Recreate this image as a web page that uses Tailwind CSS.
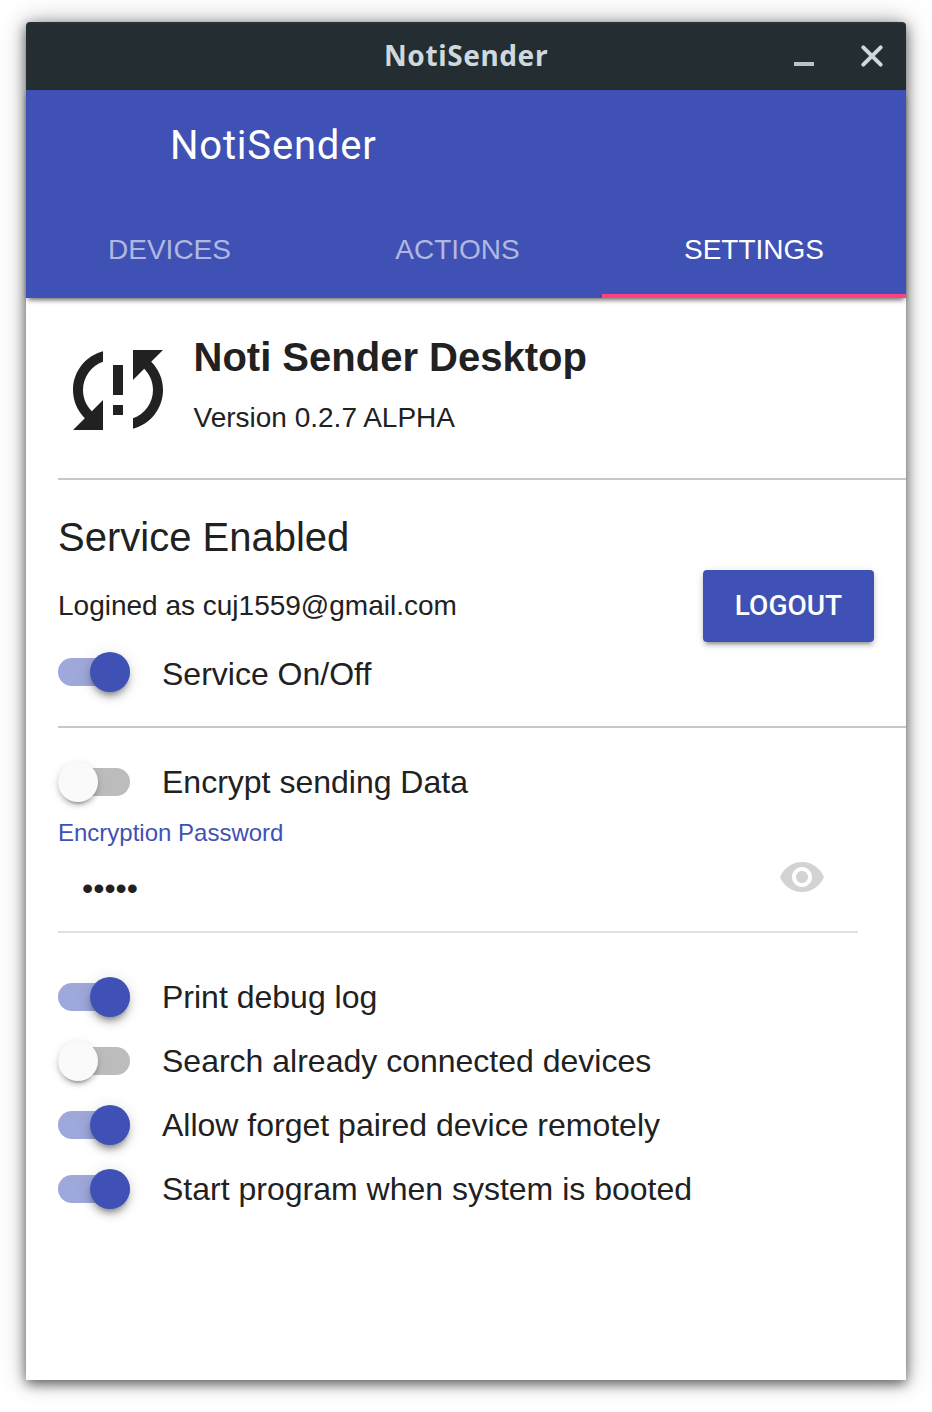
<!DOCTYPE html>
<html lang="en">
<head>
<meta charset="utf-8">
<title>NotiSender</title>
<script src="https://cdn.jsdelivr.net/npm/@tailwindcss/browser@4"></script>
</head>
<body class="bg-white h-[1412px] overflow-hidden px-[26px] pt-[22px] font-['Liberation_Sans',sans-serif] text-[#212121]">
<div class="w-[880px] h-[1358px] flex flex-col rounded-t-[4px] bg-white shadow-[0_4px_12px_rgba(0,0,0,0.52),0_0_24px_rgba(0,0,0,0.34)]">
  <div class="h-[68px] shrink-0 grid grid-cols-[1fr_auto_1fr] items-center rounded-t-[4px] bg-[#232d32] border-t-2 border-[#273238] pb-0.5">
    <span></span>
    <span class="font-['Noto_Sans',sans-serif] font-bold text-[28px] leading-[62px] pb-0.5 tracking-[0.6px] text-[#cfd8dc]">NotiSender</span>
    <div class="flex justify-end items-center gap-[46px] pr-[22px]">
      <svg class="w-5 h-6" viewBox="0 0 20 24"><path d="M0 18h20v4H0z" fill="#b9c3c9"/></svg>
      <svg class="w-6 h-6" viewBox="0 0 24 24" fill="none" stroke="#cfd8dc" stroke-width="4" stroke-linecap="round"><path d="M3.300 3.300l17.400 17.400M20.700 3.300l-17.400 17.400"/></svg>
    </div>
  </div>
  <header class="h-[208px] shrink-0 flex flex-col bg-[#3f51b5] text-white shadow-[0_4px_5px_-2px_rgba(0,0,0,0.5),0_2px_6px_-3px_rgba(0,0,0,0.3)]">
    <h1 class="h-28 pl-36 font-['Roboto',sans-serif] text-[40px] leading-[111px] tracking-[0.8px]">NotiSender</h1>
    <nav class="h-24 flex text-[28px] leading-[95px] text-center">
      <span class="w-[287px] text-white/60">DEVICES</span>
      <span class="w-[289px] text-white/60">ACTIONS</span>
      <span class="w-[304px] border-b-4 border-[#ff4081]">SETTINGS</span>
    </nav>
  </header>
  <main class="flex flex-col pl-8">
    <section class="h-[182px] flex gap-[15.5px] pt-8 border-b-2 border-[#c8c8c8]">
      <svg class="size-[120px]" viewBox="0 0 24 24" fill="#212121"><path d="M3 12c0 2.210.91 4.200 2.360 5.640L3 20h6v-6l-2.240 2.240C5.680 15.150 5 13.660 5 12c0-2.610 1.670-4.830 4-5.650V4.260C5.550 5.150 3 8.270 3 12zm8 5h2v-2h-2v2zM21 4h-6v6l2.240-2.240C18.320 8.850 19 10.340 19 12c0 2.610-1.670 4.830-4 5.650v2.090c3.450-.89 6-4.010 6-7.740 0-2.210-.91-4.200-2.360-5.640L21 4zm-10 9h2V7h-2v6z"/></svg>
      <div>
        <h2 class="text-[40px] leading-[54px] font-bold">Noti Sender Desktop</h2>
        <p class="mt-[13px] text-[28px] leading-[42px]">Version 0.2.7 ALPHA</p>
      </div>
    </section>
    <section class="h-[248px] border-b-2 border-[#c8c8c8] pt-8">
      <h2 class="h-[58px] text-[40px] leading-[50px]">Service Enabled</h2>
      <div class="h-[72px] flex items-center justify-between pr-8">
        <p class="text-[28px] leading-[72px]">Logined as cuj1559@gmail.com</p>
        <button class="w-[171px] h-[72px] rounded-[4px] bg-[#3f51b5] font-['Roboto',sans-serif] font-medium text-[28px] leading-[72px] text-white shadow-[0_4px_4px_rgba(0,0,0,0.14),0_2px_10px_rgba(0,0,0,0.12),0_6px_2px_-4px_rgba(0,0,0,0.2)]">LOGOUT</button>
      </div>
      <div class="mt-[10px] h-10 flex items-center gap-8">
        <span class="w-[72px] h-7 rounded-full bg-[#9fa8da] flex items-center justify-end"><span class="size-10 shrink-0 rounded-full bg-[#3f51b5] shadow-[0_6px_8px_rgba(0,0,0,0.14),0_2px_16px_rgba(0,0,0,0.12),0_6px_6px_-4px_rgba(0,0,0,0.4)]"></span></span>
        <span class="text-[32px] leading-10 pt-1">Service On/Off</span>
      </div>
    </section>
    <section>
      <div class="mt-[34px] h-10 flex items-center gap-8">
        <span class="w-[72px] h-7 rounded-full bg-[#bcbcbc] flex items-center justify-start"><span class="size-10 shrink-0 rounded-full bg-[#fafafa] shadow-[0_4px_4px_rgba(0,0,0,0.14),0_2px_10px_rgba(0,0,0,0.12),0_6px_2px_-4px_rgba(0,0,0,0.2)]"></span></span>
        <span class="text-[32px] leading-10">Encrypt sending Data</span>
      </div>
      <div class="w-[800px] h-[131px] border-b-2 border-[#e0e0e0] pt-[15px]">
        <p class="text-2xl leading-8 text-[#3f51b5]">Encryption Password</p>
        <div class="mt-1 h-12 flex items-center justify-between pl-6 pr-8">
          <span class="text-[32px] leading-10 pt-[22px]">•••••</span>
          <svg class="size-12" viewBox="0 0 24 24" fill="#d3d3d3"><path d="M12 4.500C7 4.500 2.730 7.610 1 12c1.730 4.390 6 7.500 11 7.500s9.270-3.110 11-7.500c-1.730-4.390-6-7.500-11-7.500zM12 17c-2.760 0-5-2.240-5-5s2.240-5 5-5 5 2.240 5 5-2.240 5-5 5zm0-8c-1.660 0-3 1.340-3 3s1.340 3 3 3 3-1.340 3-3-1.340-3-3-3z"/></svg>
        </div>
      </div>
    </section>
    <section class="mt-8 flex flex-col text-[32px]">
      <div class="h-16 flex items-center gap-8">
        <span class="w-[72px] h-7 rounded-full bg-[#9fa8da] flex items-center justify-end"><span class="size-10 shrink-0 rounded-full bg-[#3f51b5] shadow-[0_6px_8px_rgba(0,0,0,0.14),0_2px_16px_rgba(0,0,0,0.12),0_6px_6px_-4px_rgba(0,0,0,0.4)]"></span></span>
        <span>Print debug log</span>
      </div>
      <div class="h-16 flex items-center gap-8">
        <span class="w-[72px] h-7 rounded-full bg-[#bcbcbc] flex items-center justify-start"><span class="size-10 shrink-0 rounded-full bg-[#fafafa] shadow-[0_4px_4px_rgba(0,0,0,0.14),0_2px_10px_rgba(0,0,0,0.12),0_6px_2px_-4px_rgba(0,0,0,0.2)]"></span></span>
        <span>Search already connected devices</span>
      </div>
      <div class="h-16 flex items-center gap-8">
        <span class="w-[72px] h-7 rounded-full bg-[#9fa8da] flex items-center justify-end"><span class="size-10 shrink-0 rounded-full bg-[#3f51b5] shadow-[0_6px_8px_rgba(0,0,0,0.14),0_2px_16px_rgba(0,0,0,0.12),0_6px_6px_-4px_rgba(0,0,0,0.4)]"></span></span>
        <span>Allow forget paired device remotely</span>
      </div>
      <div class="h-16 flex items-center gap-8">
        <span class="w-[72px] h-7 rounded-full bg-[#9fa8da] flex items-center justify-end"><span class="size-10 shrink-0 rounded-full bg-[#3f51b5] shadow-[0_6px_8px_rgba(0,0,0,0.14),0_2px_16px_rgba(0,0,0,0.12),0_6px_6px_-4px_rgba(0,0,0,0.4)]"></span></span>
        <span>Start program when system is booted</span>
      </div>
    </section>
  </main>
</div>
</body>
</html>
